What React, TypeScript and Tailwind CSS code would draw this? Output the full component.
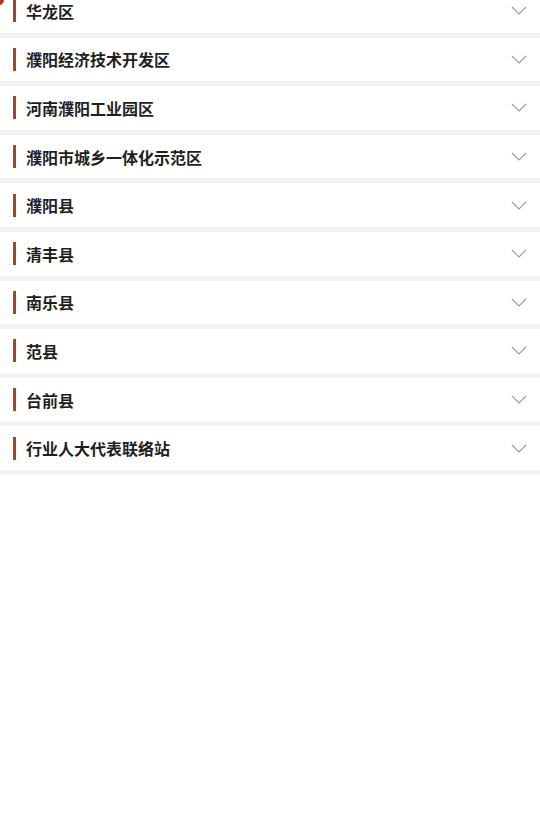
const areas = [
  "华龙区",
  "濮阳经济技术开发区",
  "河南濮阳工业园区",
  "濮阳市城乡一体化示范区",
  "濮阳县",
  "清丰县",
  "南乐县",
  "范县",
  "台前县",
  "行业人大代表联络站",
];

function Chevron() {
  return (
    <svg width="16" height="9" viewBox="0 0 16 9" fill="none">
      <polyline points="1,1 8,8 15,1" stroke="#9a9a9a" strokeWidth="1.1" />
    </svg>
  );
}

export default function App() {
  return (
    <div
      className="relative min-h-[836px] w-[540px] overflow-hidden bg-white"
      style={{ fontFamily: '"Noto Sans CJK SC", "Noto Sans", sans-serif' }}
    >
      {/* corner marker peeking in at top-left */}
      <div className="absolute -left-[6px] -top-[6px] z-10 h-[11px] w-[10px] rounded-full bg-[#b8321f]" />

      <div className="-mt-[11px] flex flex-col">
        {areas.map((name) => (
          <div
            key={name}
            className="flex h-[48.6px] items-center border-b-[5px] border-[#f2f2f2] bg-white pl-[13px] pr-[13px]"
          >
            <span className="h-[23px] w-[3px] bg-[#b5401f]" />
            <span className="ml-[10px] flex-1 text-[16px] font-bold leading-none text-[#1f1f1f]">
              {name}
            </span>
            <Chevron />
          </div>
        ))}
      </div>
    </div>
  );
}
